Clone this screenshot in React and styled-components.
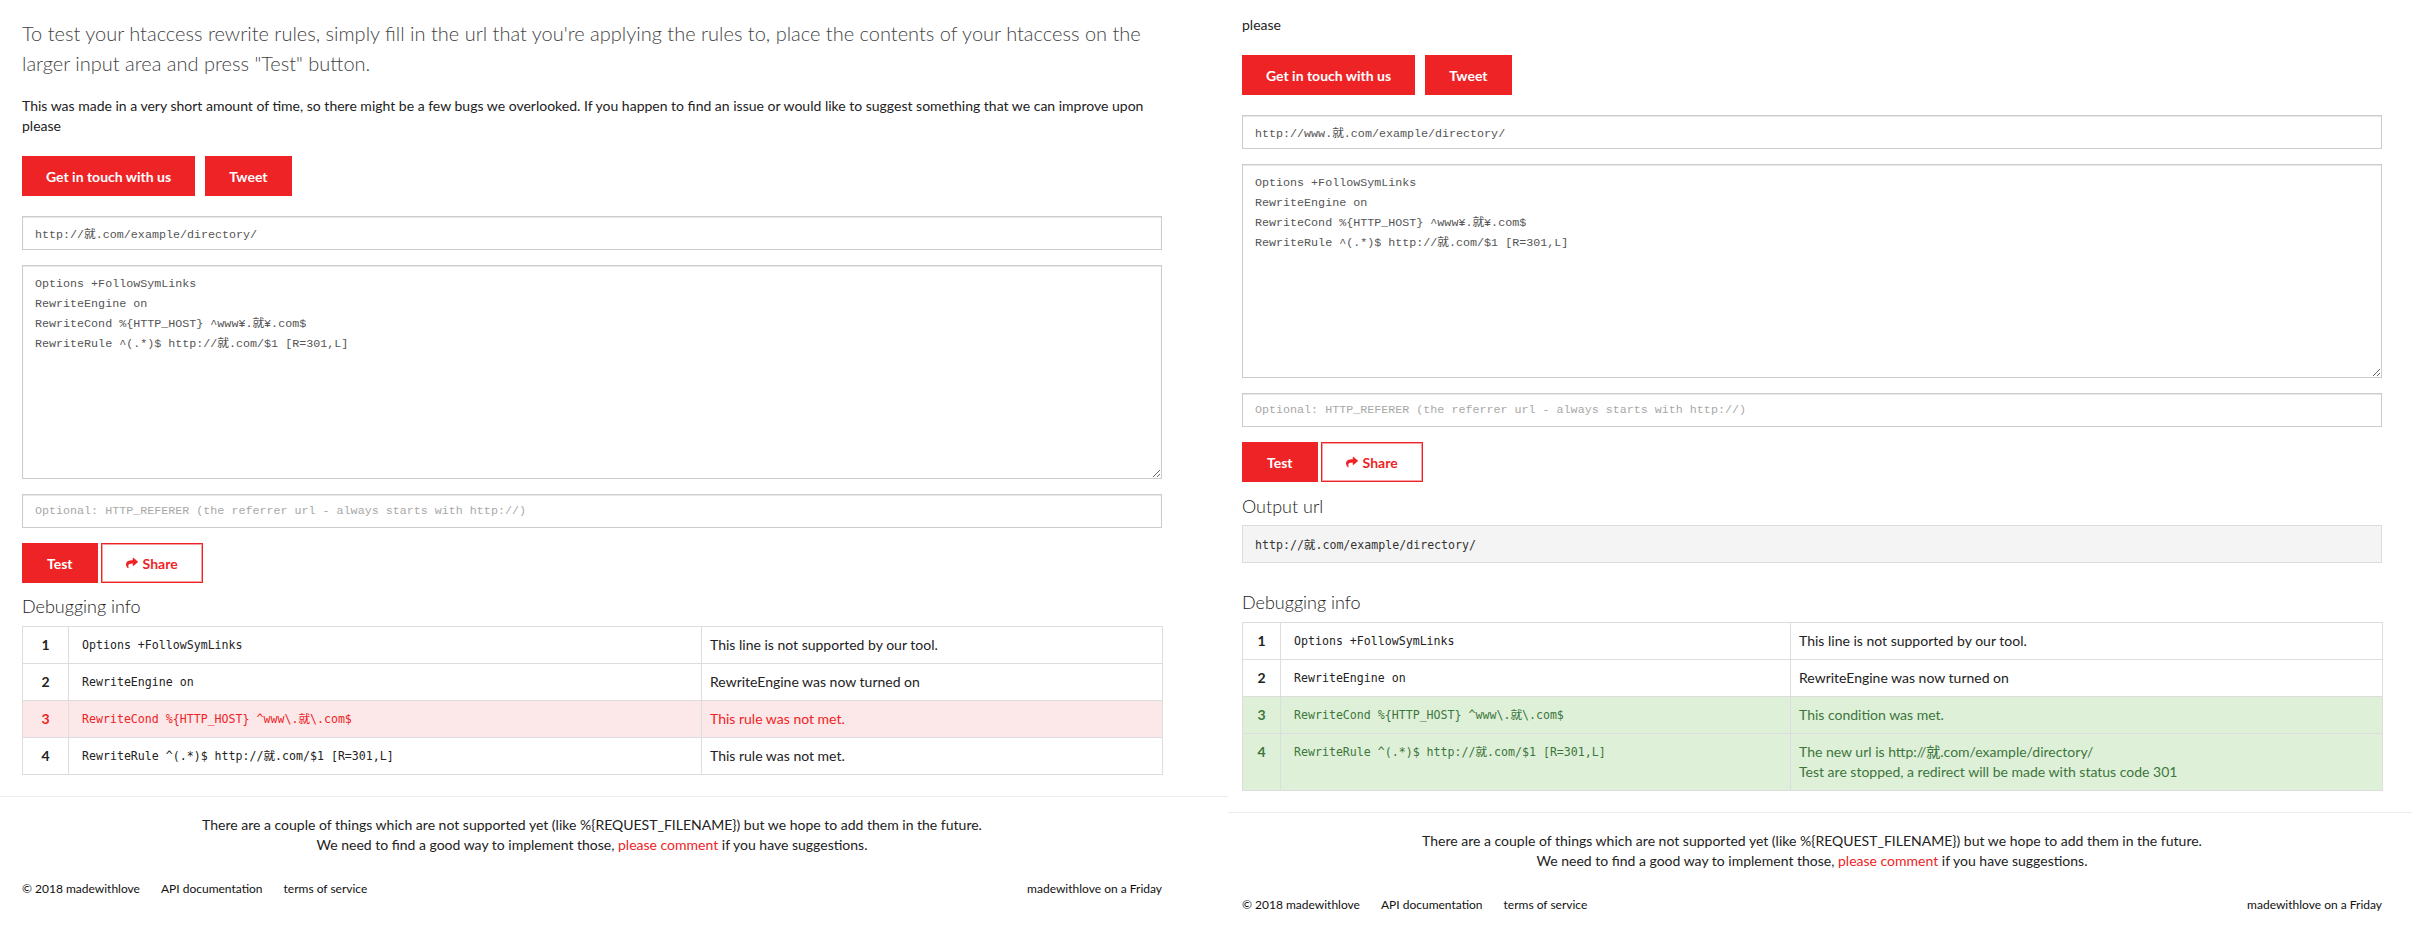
import React from 'react';
import styled, { createGlobalStyle } from 'styled-components';
import { FaShare } from 'react-icons/fa';

const RED = '#ee2326';
const MONO = '"Liberation Mono", "Noto Sans CJK JP", monospace';
const CODE = '"DejaVu Sans Mono", "Noto Sans CJK JP", monospace';

const Global = createGlobalStyle`
  html, body { margin: 0; padding: 0; background: #fff; }
  body { font-family: Lato, "Noto Sans CJK JP", sans-serif; color: #333; }
  * { box-sizing: border-box; }
`;

const Screens = styled.div`
  display: grid;
  grid-template-columns: 1228px 1184px;
  width: 2412px;
  height: 928px;
  overflow: hidden;
`;

const Panel = styled.section`
  display: flex;
  flex-direction: column;
  min-width: 0;
  padding-top: ${(p) => p.$top}px;
`;

const Container = styled.div`
  width: 1140px;
  margin-left: ${(p) => p.$left}px;
`;

const Lead = styled.p`
  margin: 0 0 18px;
  font-size: 20px;
  font-weight: 300;
  line-height: 30px;
  color: #444;
`;

const Intro = styled.p`
  margin: 0 0 20px;
  font-size: 14px;
  line-height: 20px;
  color: #222;
`;

const ButtonRow = styled.div`
  display: flex;
  gap: ${(p) => p.$gap}px;
  margin-bottom: ${(p) => p.$mb || 0}px;
`;

const Button = styled.button`
  display: inline-flex;
  align-items: center;
  gap: 5px;
  height: 40px;
  padding: 0 ${(p) => p.$pad || 24}px;
  border: ${(p) => (p.$outline ? `1px solid ${RED}` : 'none')};
  box-shadow: ${(p) => (p.$outline ? 'inset 0 0 0 1px #f6a0a1' : 'none')};
  background: ${(p) => (p.$outline ? '#fff' : RED)};
  color: ${(p) => (p.$outline ? RED : '#fff')};
  font-family: Lato, sans-serif;
  font-size: 14px;
  font-weight: 700;
  cursor: pointer;
`;

const Field = styled.input`
  display: block;
  width: 100%;
  height: 34px;
  margin: 0 0 15px;
  padding: 0 12px;
  border: 1px solid #ccc;
  box-shadow: inset 0 1px 1px rgba(0, 0, 0, 0.1);
  font-family: ${MONO};
  font-size: 11.7px;
  color: #555;
  background: #fff;
  outline: none;
  &::placeholder { color: #a8a8a8; }
`;

const Area = styled.textarea`
  display: block;
  width: 100%;
  height: 214px;
  margin: 0 0 15px;
  padding: 8px 12px;
  border: 1px solid #ccc;
  box-shadow: inset 0 1px 1px rgba(0, 0, 0, 0.1);
  font-family: ${MONO};
  font-size: 11.7px;
  line-height: 20px;
  color: #555;
  resize: vertical;
  outline: none;
`;

const Heading = styled.h3`
  margin: ${(p) => p.$mt}px 0 ${(p) => p.$mb}px;
  font-size: 18px;
  font-weight: 300;
  line-height: 20px;
  color: #222;
`;

const Output = styled.div`
  display: flex;
  align-items: center;
  height: 38px;
  padding: 0 12px;
  background: #f4f4f4;
  border: 1px solid #ddd;
  font-family: ${CODE};
  font-size: 11.6px;
  color: #333;
`;

const Table = styled.table`
  width: 100%;
  border-collapse: collapse;
  table-layout: fixed;
`;

const Row = styled.tr`
  background: ${(p) => (p.$state === 'error' ? '#fce8e9' : p.$state === 'ok' ? '#dff0d8' : '#fff')};
  color: ${(p) => (p.$state === 'error' ? RED : p.$state === 'ok' ? '#3c763d' : '#222')};
`;

const Num = styled.td`
  border: 1px solid #ddd;
  padding: 8px 0;
  text-align: center;
  vertical-align: top;
  font-size: 14px;
  font-weight: 700;
  line-height: 20px;
`;

const CodeCell = styled.td`
  border: 1px solid #ddd;
  padding: 8px 13px;
  vertical-align: top;
  font-family: ${CODE};
  font-size: 11.6px;
  line-height: 20px;
`;

const Msg = styled.td`
  border: 1px solid #ddd;
  padding: 8px 8px;
  vertical-align: top;
  font-size: 14px;
  line-height: 20px;
`;

const MsgLine = styled.div``;

const Footer = styled.footer`
  margin-top: 21px;
  padding-top: 18px;
  border-top: 1px solid #eee;
`;

const Notice = styled.p`
  margin: 0;
  text-align: center;
  font-size: 14px;
  line-height: 20px;
  color: #222;
`;

const Accent = styled.a`
  color: ${RED};
  text-decoration: none;
`;

const Links = styled.div`
  display: flex;
  justify-content: space-between;
  margin-top: 24px;
  font-size: 12px;
  font-weight: 400;
  line-height: 20px;
`;

const LinkGroup = styled.div`
  display: flex;
  gap: 21px;
`;

const FootLink = styled.a`
  color: #111;
  text-decoration: none;
`;

const AREA_TEXT = `Options +FollowSymLinks
RewriteEngine on
RewriteCond %{HTTP_HOST} ^www¥.就¥.com$
RewriteRule ^(.*)$ http://就.com/$1 [R=301,L]`;

const CODES = [
  'Options +FollowSymLinks',
  'RewriteEngine on',
  'RewriteCond %{HTTP_HOST} ^www\\.就\\.com$',
  'RewriteRule ^(.*)$ http://就.com/$1 [R=301,L]',
];

function Debug({ rows, cols }) {
  return (
    <Table>
      <colgroup>
        {cols.map((w, i) => (
          <col key={i} style={{ width: w }} />
        ))}
      </colgroup>
      <tbody>
        {rows.map((r, i) => (
          <Row key={i} $state={r.state}>
            <Num>{i + 1}</Num>
            <CodeCell>{CODES[i]}</CodeCell>
            <Msg>
              {r.msg.map((m, j) => (
                <MsgLine key={j}>{m}</MsgLine>
              ))}
            </Msg>
          </Row>
        ))}
      </tbody>
    </Table>
  );
}

function Form({ url }) {
  return (
    <>
      <ButtonRow $gap={10} $mb={20}>
        <Button>Get in touch with us</Button>
        <Button>Tweet</Button>
      </ButtonRow>
      <Field defaultValue={url} />
      <Area defaultValue={AREA_TEXT} />
      <Field placeholder="Optional: HTTP_REFERER (the referrer url - always starts with http://)" />
      <ButtonRow $gap={3}>
        <Button $pad={25}>Test</Button>
        <Button $outline $pad={24}>
          <FaShare size={12} />
          Share
        </Button>
      </ButtonRow>
    </>
  );
}

function PageFooter({ left }) {
  return (
    <Footer>
      <Container $left={left}>
        <Notice>
          There are a couple of things which are not supported yet (like %{'{'}REQUEST_FILENAME{'}'}) but we hope to add them in the future.
          <br />
          We need to find a good way to implement those, <Accent href="#">please comment</Accent> if you have suggestions.
        </Notice>
        <Links>
          <LinkGroup>
            <FootLink href="#">© 2018 madewithlove</FootLink>
            <FootLink href="#">API documentation</FootLink>
            <FootLink href="#">terms of service</FootLink>
          </LinkGroup>
          <FootLink href="#">madewithlove on a Friday</FootLink>
        </Links>
      </Container>
    </Footer>
  );
}

export default function App() {
  return (
    <>
      <Global />
      <Screens>
        <Panel $top={18}>
          <Container $left={22}>
            <Lead>
              To test your htaccess rewrite rules, simply fill in the url that you're applying the rules to, place the contents of your htaccess on the larger input area and press "Test" button.
            </Lead>
            <Intro>
              This was made in a very short amount of time, so there might be a few bugs we overlooked. If you happen to find an issue or would like to suggest something that we can improve upon please
            </Intro>
            <Form url="http://就.com/example/directory/" />
            <Heading $mt={13} $mb={10}>Debugging info</Heading>
            <Debug
              cols={[46, 633, 461]}
              rows={[
                { msg: ['This line is not supported by our tool.'] },
                { msg: ['RewriteEngine was now turned on'] },
                { state: 'error', msg: ['This rule was not met.'] },
                { msg: ['This rule was not met.'] },
              ]}
            />
          </Container>
          <PageFooter left={22} />
        </Panel>
        <Panel $top={15}>
          <Container $left={14}>
            <Intro>please</Intro>
            <Form url="http://www.就.com/example/directory/" />
            <Heading $mt={14} $mb={9}>Output url</Heading>
            <Output>http://就.com/example/directory/</Output>
            <Heading $mt={29} $mb={10}>Debugging info</Heading>
            <Debug
              cols={[38, 510, 592]}
              rows={[
                { msg: ['This line is not supported by our tool.'] },
                { msg: ['RewriteEngine was now turned on'] },
                { state: 'ok', msg: ['This condition was met.'] },
                {
                  state: 'ok',
                  msg: [
                    'The new url is http://就.com/example/directory/',
                    'Test are stopped, a redirect will be made with status code 301',
                  ],
                },
              ]}
            />
          </Container>
          <PageFooter left={14} />
        </Panel>
      </Screens>
    </>
  );
}
